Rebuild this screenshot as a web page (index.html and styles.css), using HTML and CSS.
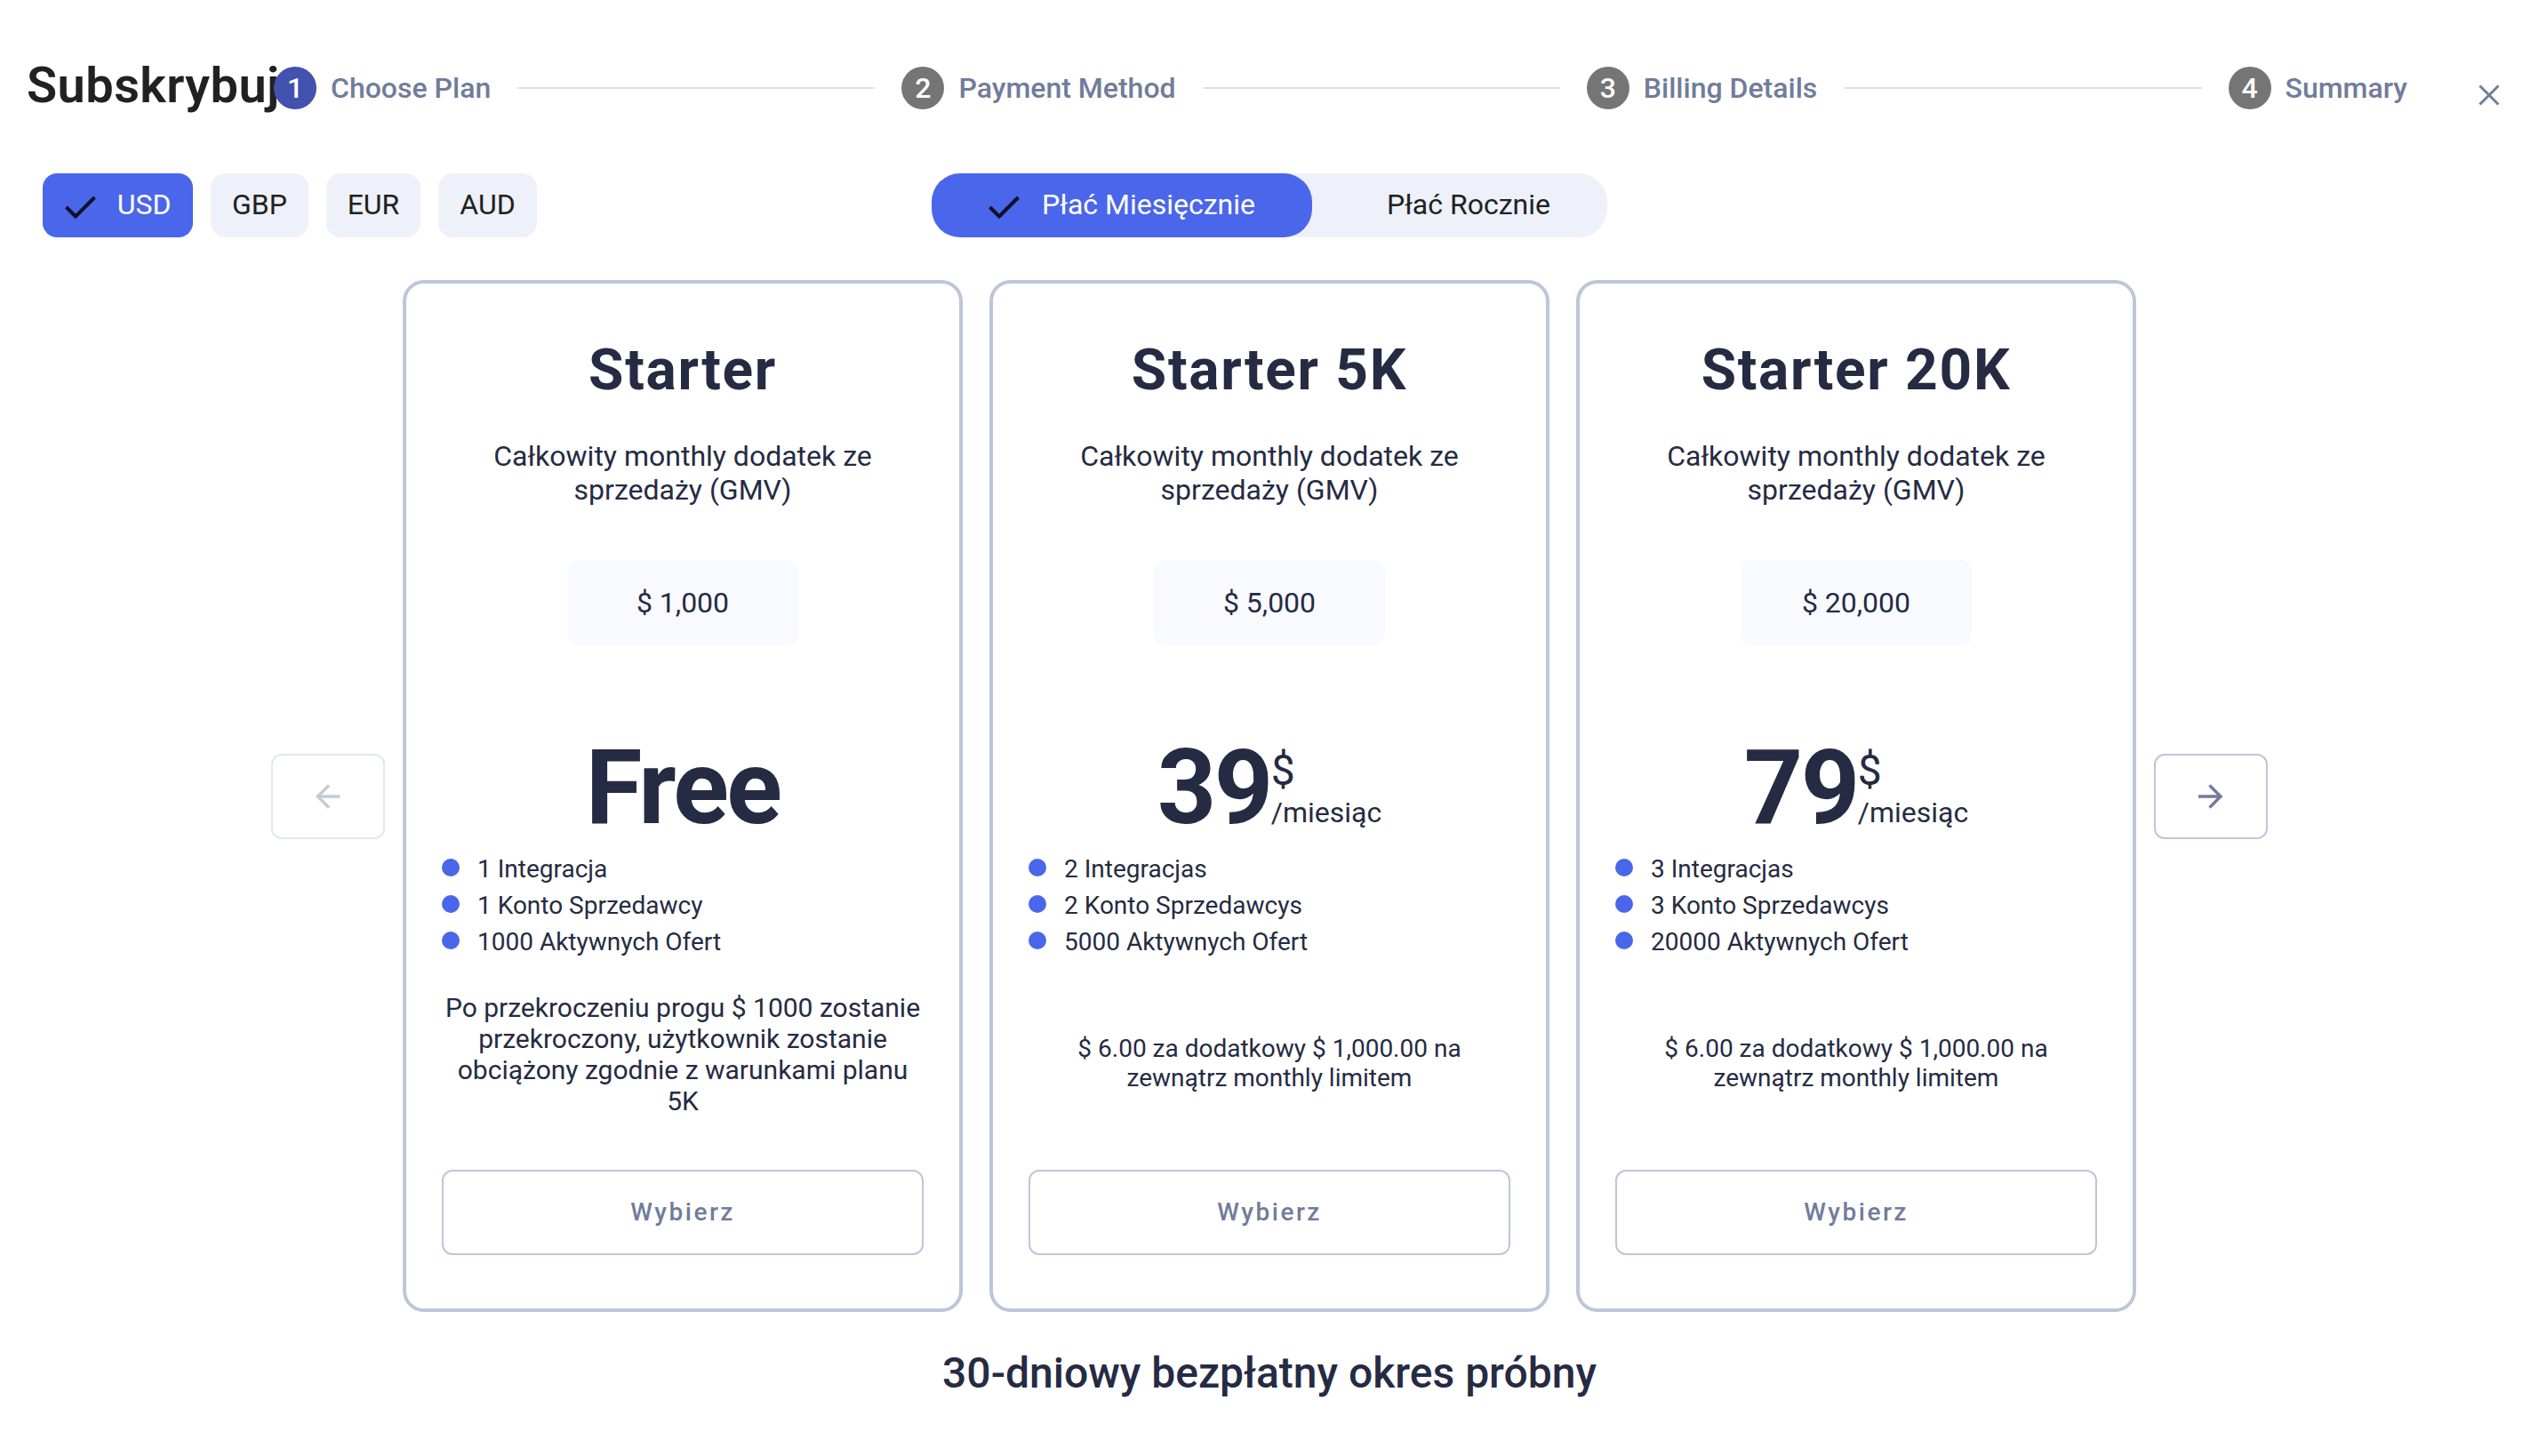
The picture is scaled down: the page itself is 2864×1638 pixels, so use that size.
FILE: index.html
```html
<!DOCTYPE html>
<html lang="pl">
<head>
<meta charset="utf-8">
<title>Subskrybuj</title>
<link rel="stylesheet" href="styles.css">
</head>
<body>
<header class="header">
  <h1 class="page-title">Subskrybuj</h1>
  <ol class="stepper">
    <li class="step active"><span class="num">1</span><span class="step-label">Choose Plan</span></li>
    <li class="line"></li>
    <li class="step"><span class="num">2</span><span class="step-label">Payment Method</span></li>
    <li class="line"></li>
    <li class="step"><span class="num">3</span><span class="step-label">Billing Details</span></li>
    <li class="line"></li>
    <li class="step"><span class="num">4</span><span class="step-label">Summary</span></li>
  </ol>
  <button class="close" aria-label="Close"><svg width="24" height="24" viewBox="0 0 24 24"><path d="M1.5 1.5 22.5 22.5M22.5 1.5 1.5 22.5"/></svg></button>
</header>
<div class="options">
  <div class="currencies">
    <button class="chip selected"><svg class="check" width="36" height="26" viewBox="0 0 36 26"><path d="M1.5 13 12 23.5 33.5 2"/></svg>USD</button>
    <button class="chip chip-gbp">GBP</button>
    <button class="chip chip-eur">EUR</button>
    <button class="chip chip-aud">AUD</button>
  </div>
  <div class="period">
    <button class="period-option selected"><svg class="check" width="36" height="26" viewBox="0 0 36 26"><path d="M1.5 13 12 23.5 33.5 2"/></svg>Płać Miesięcznie</button>
    <button class="period-option yearly">Płać Rocznie</button>
  </div>
</div>
<main class="carousel">
  <button class="nav disabled" aria-label="Previous"><svg width="28" height="28" viewBox="0 0 28 28"><path d="M27.5 14H3.5M15 1.5 2.5 14 15 26.5"/></svg></button>
  <div class="plans">
    <section class="plan">
      <h2 class="plan-name">Starter</h2>
      <p class="plan-desc">Całkowity monthly dodatek ze sprzedaży (GMV)</p>
      <div class="limit">$ 1,000</div>
      <div class="price"><span class="amount">Free</span></div>
      <ul class="features"><li>1 Integracja</li><li>1 Konto Sprzedawcy</li><li>1000 Aktywnych Ofert</li></ul>
      <div class="note"><p class="note-large">Po przekroczeniu progu $ 1000 zostanie przekroczony, użytkownik zostanie obciążony zgodnie z warunkami planu 5K</p></div>
      <button class="choose">Wybierz</button>
    </section>
    <section class="plan">
      <h2 class="plan-name">Starter 5K</h2>
      <p class="plan-desc">Całkowity monthly dodatek ze sprzedaży (GMV)</p>
      <div class="limit">$ 5,000</div>
      <div class="price"><span class="amount">39</span><span class="unit"><span class="sign">$</span><span class="per">/miesiąc</span></span></div>
      <ul class="features"><li>2 Integracjas</li><li>2 Konto Sprzedawcys</li><li>5000 Aktywnych Ofert</li></ul>
      <div class="note"><p class="note-small">$ 6.00 za dodatkowy $ 1,000.00 na zewnątrz monthly limitem</p></div>
      <button class="choose">Wybierz</button>
    </section>
    <section class="plan">
      <h2 class="plan-name">Starter 20K</h2>
      <p class="plan-desc">Całkowity monthly dodatek ze sprzedaży (GMV)</p>
      <div class="limit">$ 20,000</div>
      <div class="price"><span class="amount">79</span><span class="unit"><span class="sign">$</span><span class="per">/miesiąc</span></span></div>
      <ul class="features"><li>3 Integracjas</li><li>3 Konto Sprzedawcys</li><li>20000 Aktywnych Ofert</li></ul>
      <div class="note"><p class="note-small">$ 6.00 za dodatkowy $ 1,000.00 na zewnątrz monthly limitem</p></div>
      <button class="choose">Wybierz</button>
    </section>
  </div>
  <button class="nav" aria-label="Next"><svg width="28" height="28" viewBox="0 0 28 28"><path d="M0 14H24M12.5 1.5 25 14 12.5 26.5"/></svg></button>
</main>
<p class="trial">30-dniowy bezpłatny okres próbny</p>
</body>
</html>
```
FILE: styles.css
```css
* { box-sizing: border-box; margin: 0; padding: 0; }
body { background: #fff; color: #252b43; font-family: Roboto, "Liberation Sans", sans-serif; font-size: 32px; }
button { font: inherit; border: 0; background: none; }
ol, ul { list-style: none; }
svg { display: block; fill: none; flex: none; }

.header { display: grid; grid-template-columns: 278px 2400px 1fr; padding: 63px 34px 0 30px; height: 195px; align-items: start; }
.page-title { font-size: 56px; font-weight: 600; line-height: 66px; letter-spacing: .4px; color: #212121; white-space: nowrap; }
.stepper { display: flex; align-items: center; height: 48px; margin-top: 12px; position: relative; }
.step { display: flex; align-items: center; gap: 16px; flex: none; color: #717c9b; font-weight: 500; line-height: 38px; }
.num { width: 48px; height: 48px; border-radius: 50%; background: #757575; color: #fff; display: flex; align-items: center; justify-content: center; }
.active .num { background: #4351af; }
.line { flex: 1; height: 2px; background: #e0e0e0; margin: 0 30px; }
.close { justify-self: end; margin: 32px 18px 0 0; }
.close svg { stroke: #717c9b; stroke-width: 3; }

.options { display: grid; grid-template-columns: 1000px auto; padding-left: 48px; height: 72px; }
.currencies { display: flex; gap: 20px; }
.chip { display: flex; align-items: center; justify-content: center; height: 72px; border-radius: 16px; background: #eef1f9; color: #212121; width: 110px; padding-bottom: 2px; }
.chip.selected { width: 169px; gap: 23px; }
.chip-eur { width: 106px; }
.chip-aud { width: 111px; }
.selected { background: #4a66ea; color: #fff; }
.check { stroke: #0f1126; stroke-width: 4; margin-top: 5px; }
.period { display: flex; width: 760px; border-radius: 32px; background: #eef1f9; }
.period-option { display: flex; align-items: center; justify-content: center; height: 72px; color: #212121; flex: 1; padding-bottom: 2px; }
.period-option.selected { flex: none; width: 428px; gap: 24px; border-radius: 32px; color: #fff; }
.yearly { padding-left: 20px; }

.carousel { display: flex; align-items: flex-start; gap: 20px; margin-top: 48px; padding-left: 305px; }
.nav { width: 128px; height: 96px; margin-top: 533px; border: 2px solid #bcc6db; border-radius: 12px; display: flex; align-items: center; justify-content: center; }
.nav svg { stroke: #717c9b; stroke-width: 3.4; }
.nav.disabled { opacity: .4; }
.plans { display: flex; gap: 30px; }
.plan { width: 630px; height: 1161px; border: 4px solid #bcc6db; border-radius: 24px; padding: 60px 40px 0; display: flex; flex-direction: column; align-items: center; text-align: center; }
.plan-name { font-size: 64px; font-weight: 700; line-height: 75px; letter-spacing: 1.7px; }
.plan-desc { width: 450px; line-height: 38px; margin-top: 40px; }
.limit { width: 260px; height: 96px; line-height: 96px; margin-top: 60px; border-radius: 12px; background: #f9faff; }
.price { display: flex; height: 136px; margin-top: 92px; }
.amount { font-size: 116px; font-weight: 700; line-height: 136px; letter-spacing: -2.6px; }
.unit { display: flex; flex-direction: column; align-items: flex-start; padding-top: 21px; }
.sign { font-size: 48px; line-height: 56px; }
.per { line-height: 38px; }
.features { align-self: stretch; display: flex; flex-direction: column; gap: 8px; margin-top: 7px; font-size: 28px; line-height: 33px; text-align: left; }
.features li { display: flex; align-items: flex-start; gap: 20px; }
.features li::before { content: ""; width: 20px; height: 20px; margin-top: 5px; border-radius: 50%; background: #4a66ea; }
.note { height: 240px; padding-top: 40px; }
.note-large { font-size: 30px; line-height: 35px; }
.note-small { width: 460px; padding-top: 47px; font-size: 28px; line-height: 33px; }
.choose { width: 542px; height: 96px; padding-bottom: 1px; border: 2px solid #bcc6db; border-radius: 12px; color: #717c9b; font-size: 28px; font-weight: 500; letter-spacing: 2.5px; }
.trial { margin-top: 41px; text-align: center; font-size: 48px; font-weight: 500; line-height: 56px; padding-right: 8px; }
```
